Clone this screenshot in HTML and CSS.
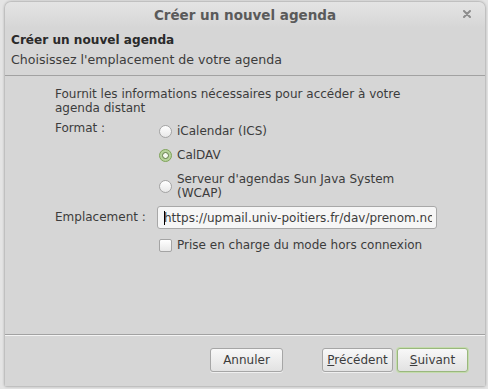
FILE: index.html
```html
<!DOCTYPE html>
<html lang="fr">
<head>
    <meta charset="UTF-8">
    <title>Créer un nouvel agenda</title>
    <link rel="stylesheet" href="styles.css">
</head>
<body>
    <div class="dialog">
        <div class="titlebar">
            <span class="title">Créer un nouvel agenda</span>
            <svg class="close" width="8" height="8" viewBox="0 0 8 8">
                <path d="M1 1 L7 7 M7 1 L1 7" stroke="#8c8c8c" stroke-width="2" stroke-linecap="round"/>
            </svg>
        </div>
        <div class="header">
            <div class="header-title">Créer un nouvel agenda</div>
            <div class="header-desc">Choisissez l'emplacement de votre agenda</div>
        </div>
        <div class="content">
            <p class="intro">Fournit les informations nécessaires pour accéder à votre agenda distant</p>
            <div class="form-grid">
                <div class="label">Format :</div>
                <div class="radios">
                    <label class="radio-row"><span class="radio"></span><span>iCalendar (ICS)</span></label>
                    <label class="radio-row"><span class="radio checked"></span><span>CalDAV</span></label>
                    <label class="radio-row"><span class="radio"></span><span>Serveur d'agendas Sun Java System<br>(WCAP)</span></label>
                </div>
                <div class="label label-loc">Emplacement :</div>
                <div class="textbox"><span class="caret"></span><span class="textbox-value">https://upmail.univ-poitiers.fr/dav/prenom.nom</span></div>
                <div></div>
                <label class="check-row"><span class="checkbox"></span><span>Prise en charge du mode hors connexion</span></label>
            </div>
        </div>
        <div class="footer">
            <button class="btn btn-cancel">Annuler</button>
            <div class="nav-buttons">
                <button class="btn btn-back"><u>P</u>récédent</button>
                <button class="btn btn-default"><u>S</u>uivant</button>
            </div>
        </div>
    </div>
</body>
</html>
```

FILE: styles.css
```css
body {
    margin: 0;
    width: 488px;
    height: 389px;
    overflow: hidden;
    background: #e4e4e4;
    font-family: 'DejaVu Sans', sans-serif;
    font-size: 12px;
    color: #3c3c3c;
}
.dialog {
    margin: 2px 0 0 5px;
    width: 480px;
    height: 384px;
    box-sizing: border-box;
    background: #d6d6d6;
    border-radius: 6px 6px 0 0;
    box-shadow: 0 0 3px rgba(0, 0, 0, 0.45);
    display: flex;
    flex-direction: column;
}
.titlebar {
    height: 26px;
    border-radius: 6px 6px 0 0;
    background: linear-gradient(#e4e4e4, #d6d6d6);
    display: flex;
    align-items: center;
    justify-content: center;
    position: relative;
}
.title {
    font-weight: bold;
    font-size: 13.5px;
    color: #5a5a5a;
}
.close {
    position: absolute;
    right: 14px;
    top: 8px;
}
.header {
    padding: 3px 6px 6px;
    border-bottom: 1px solid #a2a2a2;
    line-height: 19px;
}
.header-title {
    font-weight: bold;
    font-size: 12.1px;
    color: #2a2a2a;
}
.header-desc {
    font-size: 12.6px;
}
.content {
    flex: 1;
    padding: 11px 0 0 50px;
    border-bottom: 1px solid #a2a2a2;
}
.intro {
    margin: 0 0 4px;
    width: 380px;
    line-height: 14px;
}
.form-grid {
    display: grid;
    grid-template-columns: 102px 280px;
    align-items: start;
    line-height: 14px;
}
.label {
    padding-top: 2px;
}
.label-loc {
    align-self: center;
    padding-top: 0;
}
.radios {
    display: flex;
    flex-direction: column;
}
.radio-row, .check-row {
    display: flex;
    align-items: center;
    gap: 5px;
    padding: 5px 0 5px 2px;
}
.radio {
    width: 11px;
    height: 11px;
    border-radius: 50%;
    border: 1px solid #a4a4a4;
    background: linear-gradient(#ffffff, #e8e8e8);
    flex: none;
}
.radio.checked {
    border-color: #7fa35a;
    background: #b5d29a;
    position: relative;
}
.radio.checked::after {
    content: "";
    position: absolute;
    left: 2px;
    top: 2px;
    width: 5px;
    height: 5px;
    border-radius: 50%;
    background: #f4f8ef;
    border: 1px solid #5e7a44;
}
.textbox {
    height: 23px;
    margin-top: 1px;
    box-sizing: border-box;
    border: 1px solid #a8a8a8;
    border-radius: 3px;
    background: #f6f6f6;
    padding: 4px 4px 0 6px;
    position: relative;
    display: flex;
}
.textbox-value {
    white-space: nowrap;
    overflow: hidden;
    flex: 1;
}
.caret {
    position: absolute;
    left: 6px;
    top: 4px;
    width: 1px;
    height: 14px;
    background: #000;
}
.checkbox {
    width: 11px;
    height: 11px;
    border: 1px solid #a4a4a4;
    border-radius: 2px;
    background: linear-gradient(#ffffff, #e8e8e8);
    flex: none;
}
.check-row {
    margin-top: 4px;
}
.footer {
    border-top: 1px solid #f4f4f4;
    height: 51px;
    box-sizing: border-box;
    padding: 12px 17px 0 205px;
    display: flex;
    align-items: flex-start;
    justify-content: space-between;
}
.nav-buttons {
    display: flex;
    gap: 4px;
}
.btn {
    font-family: 'DejaVu Sans', sans-serif;
    font-size: 12px;
    color: #3c3c3c;
    height: 24px;
    padding: 0;
    border: 1px solid #a6a6a6;
    border-radius: 3px;
    background: linear-gradient(#f8f8f8, #e2e2e2);
    box-shadow: 0 1px 0 rgba(255, 255, 255, 0.6);
}
.btn-cancel {
    width: 73px;
}
.btn-back {
    width: 71px;
}
.btn-default {
    width: 71px;
    border-color: #9ab77e;
    box-shadow: 0 0 0 1px #c4dcac;
}
u {
    text-decoration-thickness: 1px;
}
```
